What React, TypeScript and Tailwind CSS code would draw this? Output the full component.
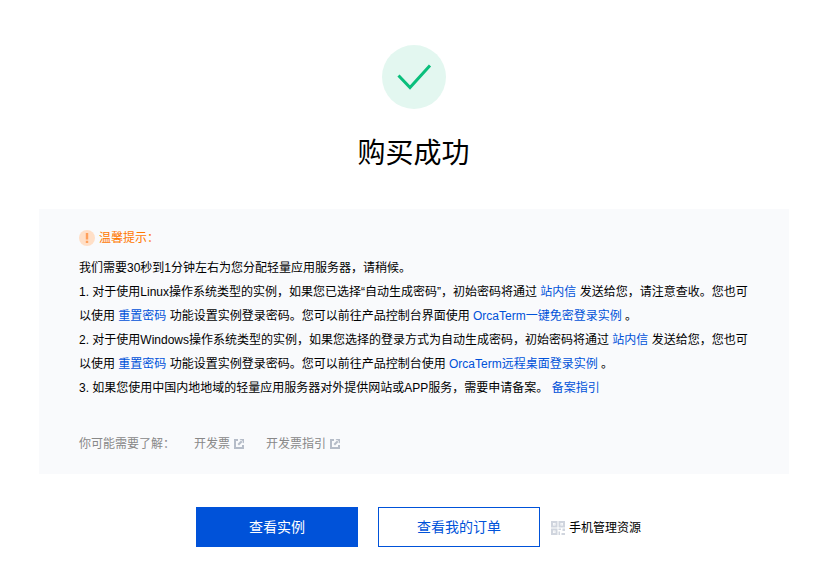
const A = ({ children }: { children: React.ReactNode }) => (
  <a className="text-[#0052d9]">{children}</a>
);

const External = () => (
  <svg viewBox="0 0 10 10" className="ml-1 h-[10px] w-[10px]" fill="none">
    <path d="M4 1H1v8h8V6" stroke="#b5bcc8" strokeWidth="2" />
    <path d="M5.500 0H10v4.500zM7.500 1 3.500 5 5 6.500 9 2.500z" fill="#b5bcc8" />
  </svg>
);

const Qr = () => (
  <svg viewBox="0 0 14 14" className="h-[14px] w-[14px]" fill="none">
    <path d="M1 1h4.500v4.500H1zM8.500 1H13v4.500H8.500zM1 8.500h4.500V13H1z" stroke="#d0d5de" strokeWidth="2" />
    <path d="M2.500 2.500H4V4H2.500zM10 2.500h1.500V4H10zM2.500 10H4v1.500H2.500z" fill="#eceef2" />
    <path d="M7.500 7.500H10V9H7.500zM11.500 7.500H14V10h-2.500zM7.500 10.500H9V14H7.500zM10.500 12H14v2h-3.500z" fill="#d0d5de" />
  </svg>
);

const Warn = () => (
  <svg viewBox="0 0 16 16" className="mr-1 h-4 w-4">
    <circle cx="8" cy="8" r="8" fill="#ffdfc7" />
    <path d="M6.800 3h2.400v6.500H6.800zM6.800 10.800h2.400V13H6.800z" fill="#ffa05c" />
  </svg>
);

export default function App() {
  return (
    <div className="min-h-[574px] w-[831px] overflow-hidden bg-white font-['Liberation_Sans','Noto_Sans_CJK_SC',sans-serif] text-xs text-black">
      <div className="w-[828px] pt-[45px]">
        <div className="mx-auto flex h-16 w-16 items-center justify-center rounded-full bg-[#e3f7f0]">
          <svg viewBox="0 0 64 64" className="h-16 w-16" fill="none">
            <path d="M16.500 30.500 L28 42.500 L48 20.500" stroke="#0abf7c" strokeWidth="3" />
          </svg>
        </div>
        <h1 className="mt-[25px] pr-px text-center text-[28px] leading-[40px] font-normal">购买成功</h1>
        <div className="mx-auto mt-[35px] h-[265px] w-[750px] bg-[#f9fafc] px-10 pt-[18px]">
          <div className="flex h-[22px] items-center text-[#ff7800]">
            <Warn />
            温馨提示：
          </div>
          <div className="mt-[7px] leading-6">
            <p>我们需要30秒到1分钟左右为您分配轻量应用服务器，请稍候。</p>
            <p>
              1. 对于使用Linux操作系统类型的实例，如果您已选择“自动生成密码”，初始密码将通过 <A>站内信</A> 发送给您，请注意查收。您也可以使用 <A>重置密码</A> 功能设置实例登录密码。您可以前往产品控制台界面使用 <A>OrcaTerm一键免密登录实例</A> 。
            </p>
            <p>
              2. 对于使用Windows操作系统类型的实例，如果您选择的登录方式为自动生成密码，初始密码将通过 <A>站内信</A> 发送给您，您也可以使用 <A>重置密码</A> 功能设置实例登录密码。您可以前往产品控制台使用 <A>OrcaTerm远程桌面登录实例</A> 。
            </p>
            <p>
              3. 如果您使用中国内地地域的轻量应用服务器对外提供网站或APP服务，需要申请备案。 <A>备案指引</A>
            </p>
          </div>
          <div className="mt-[34px] flex h-5 items-center text-[#888]">
            <span className="w-[115px]">你可能需要了解：</span>
            <span className="flex items-center">开发票<External /></span>
            <span className="ml-[22px] flex items-center">开发票指引<External /></span>
          </div>
        </div>
        <div className="mt-[33px] flex items-center pl-[196px]">
          <button className="h-10 w-[162px] bg-[#0052d9] text-sm text-white">查看实例</button>
          <button className="ml-5 h-10 w-[162px] border border-[#0052d9] bg-white text-sm text-[#0052d9]">查看我的订单</button>
          <span className="ml-[11px] flex items-center gap-1 pt-px">
            <Qr />
            手机管理资源
          </span>
        </div>
      </div>
    </div>
  );
}
